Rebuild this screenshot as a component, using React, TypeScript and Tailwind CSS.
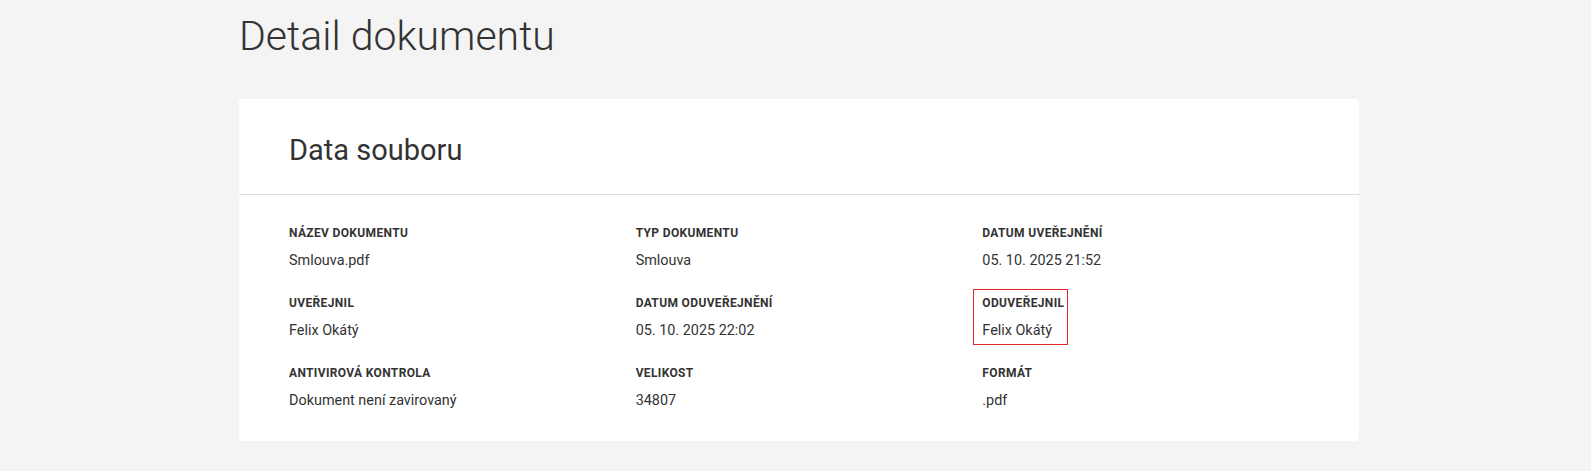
import React from "react";

type Field = {
  label: string;
  value: string;
  highlighted?: boolean;
};

const fields: Field[] = [
  { label: "Název dokumentu", value: "Smlouva.pdf" },
  { label: "Typ dokumentu", value: "Smlouva" },
  { label: "Datum uveřejnění", value: "05. 10. 2025 21:52" },
  { label: "Uveřejnil", value: "Felix Okátý" },
  { label: "Datum oduveřejnění", value: "05. 10. 2025 22:02" },
  { label: "Oduveřejnil", value: "Felix Okátý", highlighted: true },
  { label: "Antivirová kontrola", value: "Dokument není zavirovaný" },
  { label: "Velikost", value: "34807" },
  { label: "Formát", value: ".pdf" },
];

function FieldCell({ label, value, highlighted }: Field) {
  const body = (
    <>
      <div className="text-[12px] leading-4 font-bold uppercase tracking-[0.35px] text-[#333]">
        {label}
      </div>
      <div className="mt-[10px] text-[14.4px] leading-5 text-[#333]">{value}</div>
    </>
  );

  if (highlighted) {
    // selected cell gets a red frame drawn outside its content box
    return (
      <div className="-mt-[6px] -mb-[4px] -ml-[9px] w-fit border border-[#e2282d] pt-[5px] pb-[3px] pl-[8px] pr-[3px]">
        {body}
      </div>
    );
  }

  return <div>{body}</div>;
}

export default function App() {
  return (
    <div
      className="min-h-screen bg-[#f4f4f4] pt-[11px] pb-[30px]"
      style={{ fontFamily: "Roboto, 'Liberation Sans', sans-serif" }}
    >
      <div className="ml-[239px] w-[1120px]">
        <h1 className="mb-[38px] text-[41px] leading-[50px] font-light text-[#333]">
          Detail dokumentu
        </h1>

        <div className="rounded bg-white">
          <div className="border-b border-[#dedede] pl-[50px] pr-[30px] pt-[34px] pb-[27px]">
            <h2 className="text-[29px] leading-[34px] font-normal text-[#333]">Data souboru</h2>
          </div>

          <div className="grid grid-cols-3 gap-y-[24px] pl-[50px] pr-[30px] pt-[30px] pb-[30px]">
            {fields.map((f) => (
              <FieldCell key={f.label} {...f} />
            ))}
          </div>
        </div>
      </div>
    </div>
  );
}
